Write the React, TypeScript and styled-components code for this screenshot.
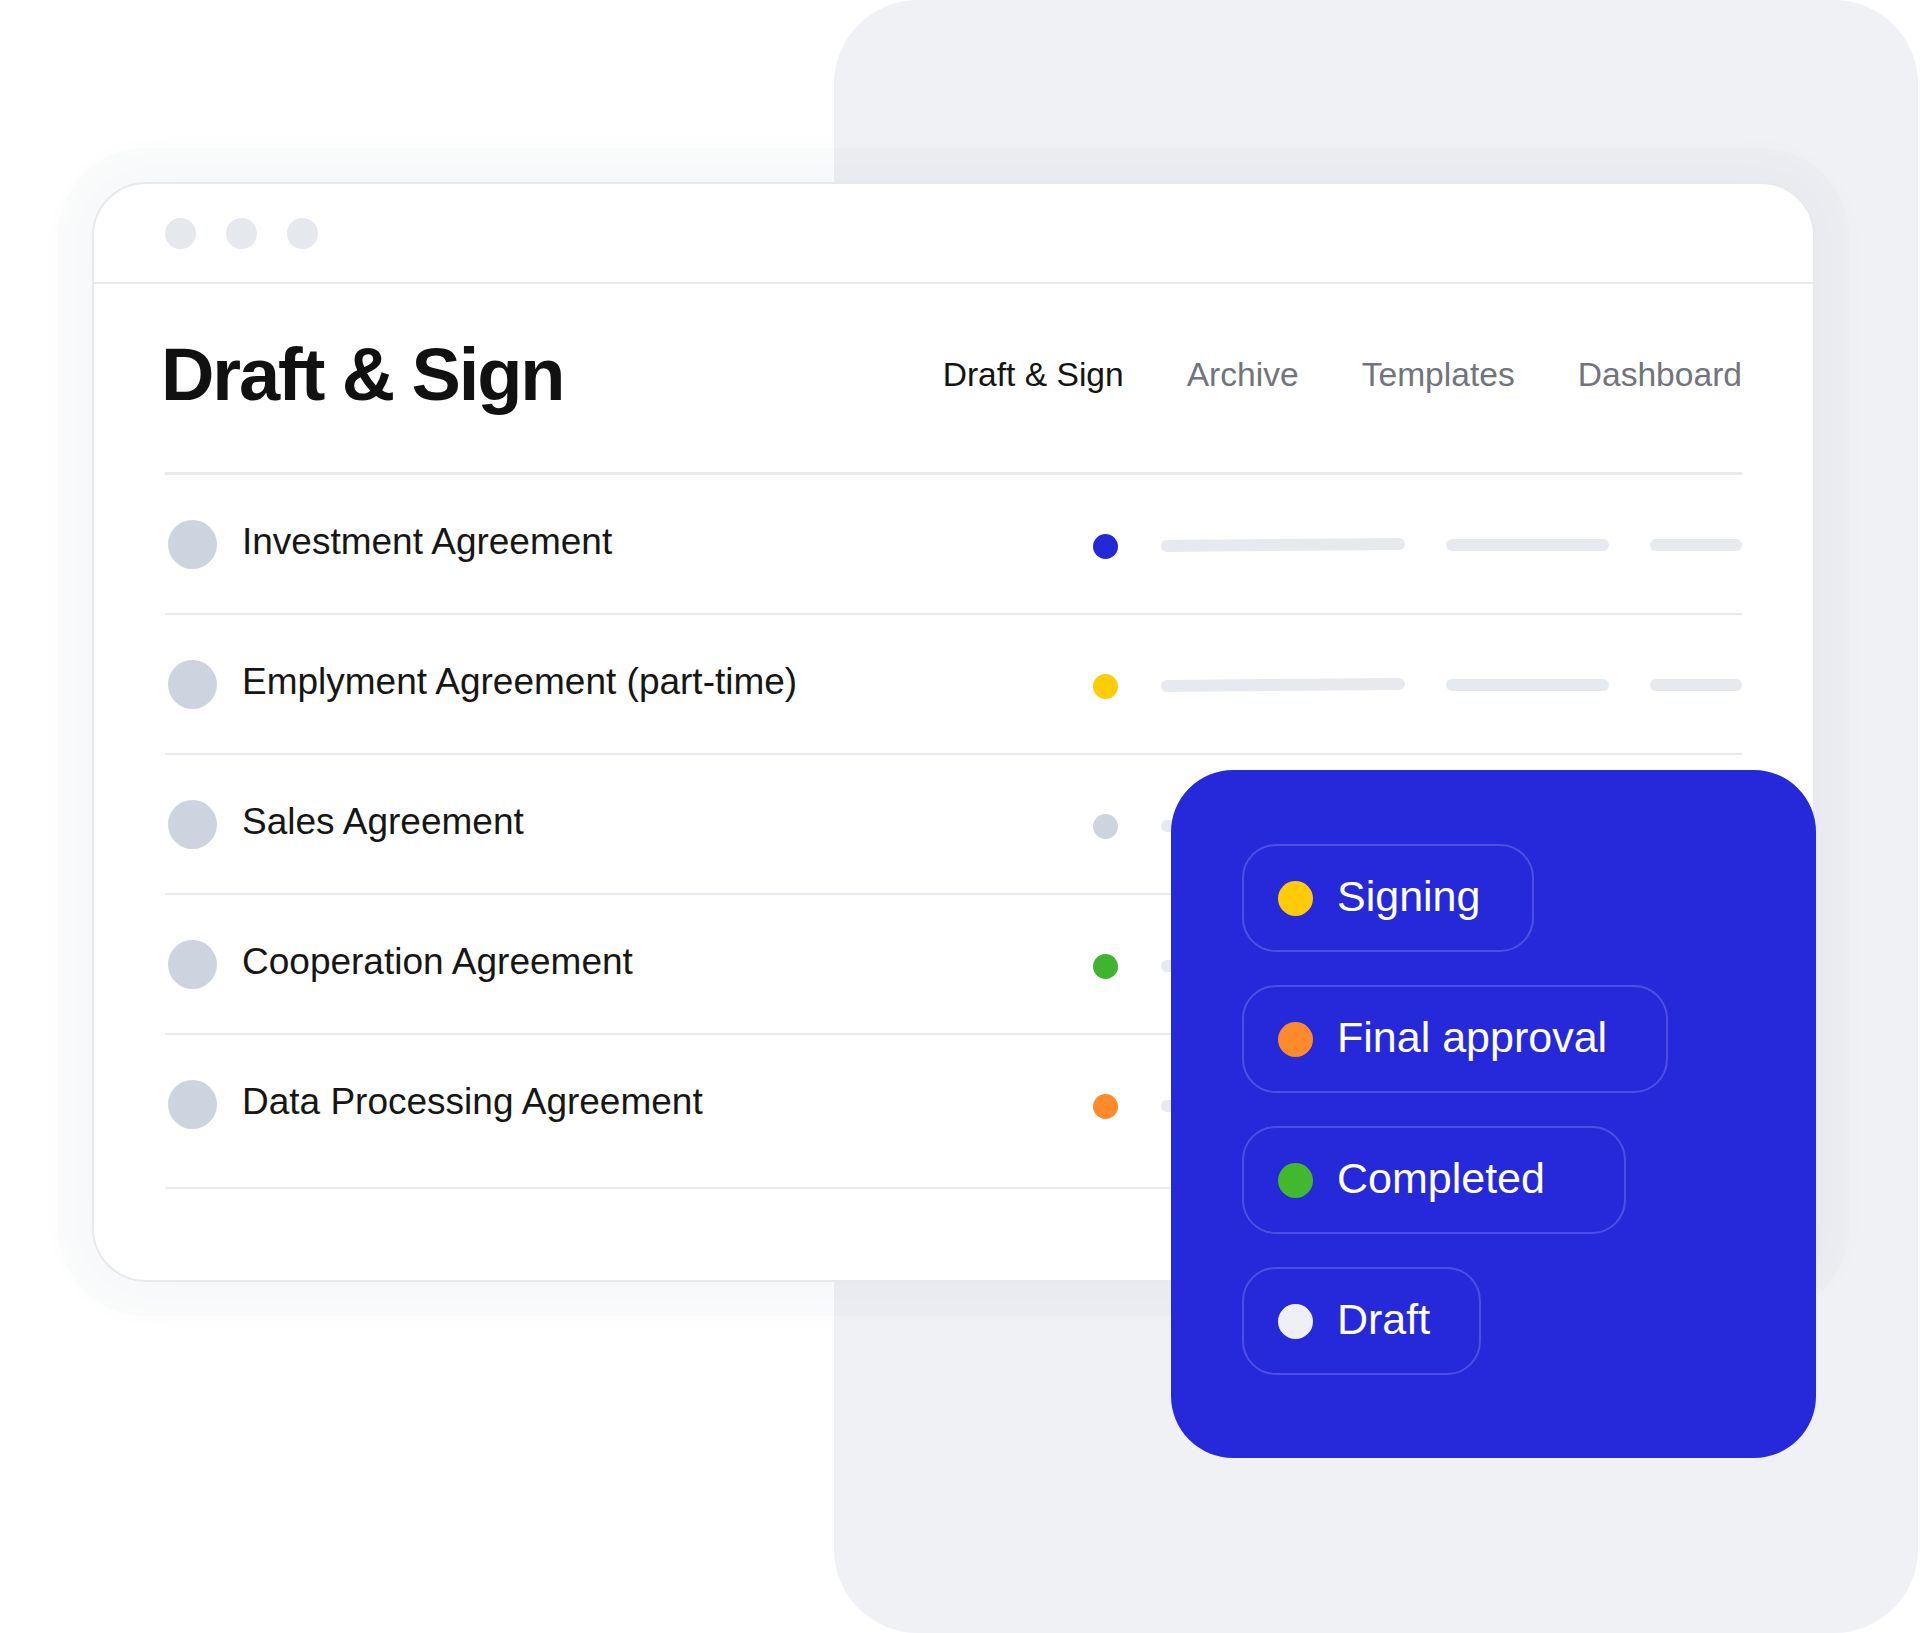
import React from "react";
import styled, { createGlobalStyle } from "styled-components";

const GlobalStyle = createGlobalStyle`
  html, body { margin: 0; padding: 0; background: #ffffff; }
  body { font-family: "Liberation Sans", Arial, Helvetica, sans-serif; -webkit-font-smoothing: antialiased; }
  * { box-sizing: border-box; }
`;

const Stage = styled.div`
  position: relative;
  width: 1920px;
  height: 1633px;
  overflow: hidden;
  background: #ffffff;
  padding: 182px 0 0 92px;
`;

const Backdrop = styled.div`
  position: absolute;
  left: 834px;
  top: 0;
  width: 1084px;
  height: 1633px;
  border-radius: 84px;
  background: #f0f1f5;
  z-index: 0;
`;

const Window = styled.div`
  position: relative;
  z-index: 1;
  width: 1723px;
  height: 1100px;
  background: #ffffff;
  border: 2px solid #e7e9ef;
  border-radius: 54px;
  box-shadow: 0 0 0 34px rgba(30, 40, 90, 0.015), 0 0 50px 24px rgba(30, 40, 90, 0.02);
  display: flex;
  flex-direction: column;
`;

const TitleBar = styled.div`
  height: 100px;
  border-bottom: 2px solid #e7e9ef;
  display: flex;
  align-items: center;
  gap: 30px;
  padding-left: 71px;
`;

const WindowDot = styled.span`
  width: 31px;
  height: 31px;
  border-radius: 50%;
  background: #e5e8ed;
`;

const Content = styled.div`
  padding: 0 71px 0 71px;
  display: flex;
  flex-direction: column;
`;

const Header = styled.div`
  height: 191px;
  border-bottom: 3px solid #e8eaef;
  display: flex;
  align-items: center;
  justify-content: space-between;
  padding-bottom: 6px;
`;

const Title = styled.h1`
  margin: 0;
  font-size: 74px;
  line-height: 1;
  font-weight: 700;
  letter-spacing: -2.1px;
  color: #111111;
  margin-left: -4px;
`;

const Nav = styled.nav`
  display: flex;
  align-items: center;
  gap: 63px;
`;

const NavItem = styled.span<{ $active?: boolean }>`
  font-size: 33.6px;
  line-height: 1;
  color: ${(p) => (p.$active ? "#141414" : "#71747d")};
`;

const Row = styled.div`
  height: 140px;
  border-bottom: 2px solid #e8eaef;
  display: flex;
  align-items: center;
  &:last-child {
    height: 154px;
    padding-bottom: 14px;
  }
`;

const Avatar = styled.span`
  width: 49px;
  height: 49px;
  border-radius: 50%;
  background: #ced3e0;
  margin-left: 3px;
  flex: none;
`;

const DocName = styled.span`
  flex: 1;
  margin-left: 25px;
  font-size: 37px;
  line-height: 1;
  color: #161616;
  margin-top: -6px;
`;

const StatusDot = styled.span<{ $color: string }>`
  width: 25px;
  height: 25px;
  border-radius: 50%;
  background: ${(p) => p.$color};
  flex: none;
  margin-right: 43px;
  margin-top: 4px;
`;

const Bars = styled.div`
  display: flex;
  align-items: center;
  gap: 41px;
  margin-top: 2px;
`;

const Bar = styled.span<{ $w: number; $tilt?: boolean }>`
  width: ${(p) => p.$w}px;
  height: 12px;
  border-radius: 6px;
  background: #e6e9ee;
  transform: ${(p) => (p.$tilt ? "rotate(-0.45deg)" : "none")};
`;

const StatusPanel = styled.div`
  position: absolute;
  z-index: 2;
  left: 1171px;
  top: 770px;
  width: 645px;
  height: 688px;
  border-radius: 62px;
  background: #2629d9;
  padding: 74px 0 0 71px;
  display: flex;
  flex-direction: column;
  gap: 33px;
`;

const Pill = styled.div<{ $w: number }>`
  width: ${(p) => p.$w}px;
  height: 108px;
  border: 2px solid rgba(255, 255, 255, 0.18);
  border-radius: 34px;
  display: flex;
  align-items: center;
  padding-left: 34px;
  gap: 24px;
`;

const PillDot = styled.span<{ $color: string }>`
  width: 35px;
  height: 35px;
  border-radius: 50%;
  background: ${(p) => p.$color};
  flex: none;
`;

const PillLabel = styled.span`
  font-size: 43px;
  line-height: 1;
  color: #ffffff;
  margin-top: -4px;
`;

const docs = [
  { name: "Investment Agreement", color: "#2428d6" },
  { name: "Emplyment Agreement (part-time)", color: "#ffcb05" },
  { name: "Sales Agreement", color: "#ced3e0" },
  { name: "Cooperation Agreement", color: "#3fb52f" },
  { name: "Data Processing Agreement", color: "#ff8a2c" },
];

const statuses = [
  { label: "Signing", color: "#ffcb05", w: 292 },
  { label: "Final approval", color: "#ff8a2c", w: 426 },
  { label: "Completed", color: "#42b82f", w: 384 },
  { label: "Draft", color: "#eef0f5", w: 239 },
];

export default function App() {
  return (
    <>
      <GlobalStyle />
      <Stage>
        <Backdrop />
        <Window>
          <TitleBar>
            <WindowDot />
            <WindowDot />
            <WindowDot />
          </TitleBar>
          <Content>
            <Header>
              <Title>Draft &amp; Sign</Title>
              <Nav>
                <NavItem $active>Draft &amp; Sign</NavItem>
                <NavItem>Archive</NavItem>
                <NavItem>Templates</NavItem>
                <NavItem>Dashboard</NavItem>
              </Nav>
            </Header>
            {docs.map((d) => (
              <Row key={d.name}>
                <Avatar />
                <DocName>{d.name}</DocName>
                <StatusDot $color={d.color} />
                <Bars>
                  <Bar $w={244} $tilt />
                  <Bar $w={163} />
                  <Bar $w={92} />
                </Bars>
              </Row>
            ))}
          </Content>
        </Window>
        <StatusPanel>
          {statuses.map((s) => (
            <Pill key={s.label} $w={s.w}>
              <PillDot $color={s.color} />
              <PillLabel>{s.label}</PillLabel>
            </Pill>
          ))}
        </StatusPanel>
      </Stage>
    </>
  );
}
